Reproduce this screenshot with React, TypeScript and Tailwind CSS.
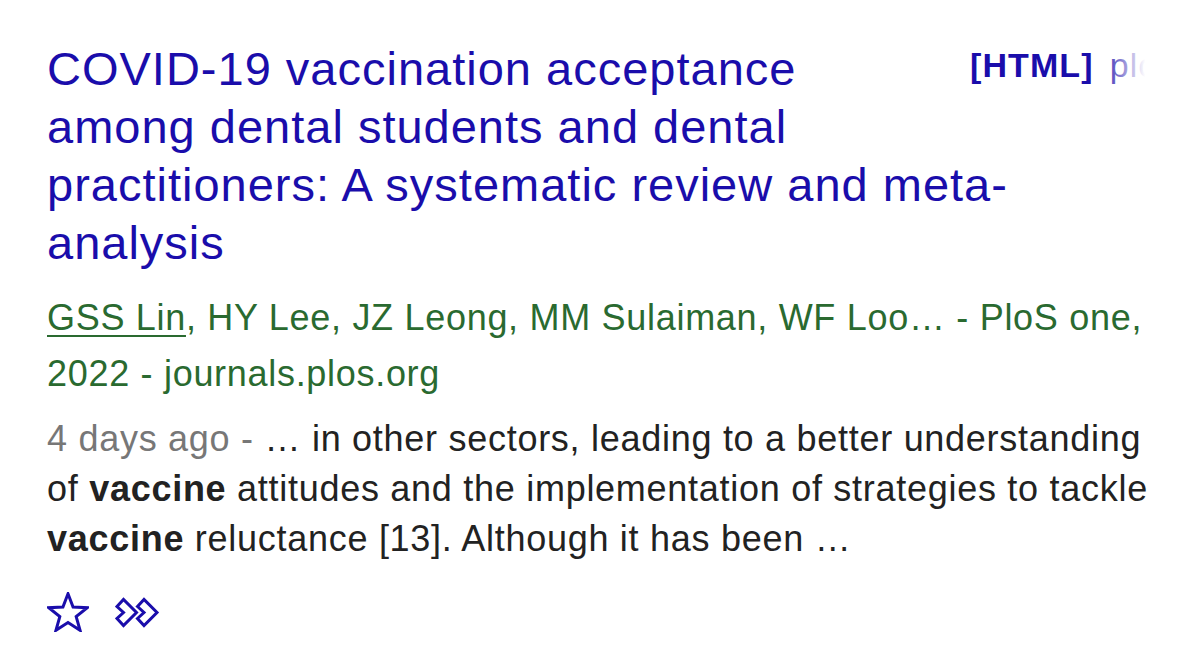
import React from "react";

function Star() {
  return (
    <svg width="42" height="40" viewBox="0 0 42 40" fill="none">
      <polygon
        points="21,1.8 26.06,15.04 40.3,15.67 29.18,24.66 33.05,38.3 21,30.6 8.95,38.3 12.82,24.66 1.7,15.67 15.94,15.04"
        stroke="#1a0dab"
        strokeWidth="3"
        strokeLinejoin="miter"
      />
    </svg>
  );
}

function DoubleChevron() {
  return (
    <svg width="45" height="31" viewBox="0 0 45 31" fill="none">
      <polygon
        points="2,9.5 8.5,2.5 21.5,15.5 8.5,28.5 2,21.5 8.5,15.5"
        stroke="#1a0dab"
        strokeWidth="3"
        strokeLinejoin="miter"
      />
      <polygon
        points="22.5,9.5 29,2.5 42,15.5 29,28.5 22.5,21.5 29,15.5"
        stroke="#1a0dab"
        strokeWidth="3"
        strokeLinejoin="miter"
      />
    </svg>
  );
}

export default function App() {
  return (
    <div
      className="min-h-screen bg-white pl-[47px] pr-[35px] pt-[40px]"
      style={{ fontFamily: '"Liberation Sans", Arial, sans-serif' }}
    >
      <div className="relative float-right ml-[60px] mt-[5px] w-[195px] overflow-hidden whitespace-nowrap text-[34px] leading-[40px] tracking-[1.1px] text-[#1a0dab]">
        <span className="font-bold">[HTML]</span>
        <span className="ml-[16px]">plos.org</span>
        <div className="absolute inset-y-0 right-0 w-[66px] bg-[linear-gradient(to_right,rgba(255,255,255,0),#ffffff_70%)]" />
      </div>
      <h3 className="mr-[128px] text-[47px] font-normal leading-[58px] tracking-[1px] text-[#1a0dab]">
        COVID-19 vaccination acceptance among dental students and dental
        practitioners: A systematic review and meta-analysis
      </h3>
      <div className="mt-[18px] text-[36px] leading-[56px] tracking-[0.7px] text-[#2a6a30]">
        <span className="underline decoration-[2px] underline-offset-[5px]">GSS Lin</span>, HY Lee, JZ Leong, MM
        Sulaiman, WF Loo… - PloS one, 2022 - journals.plos.org
      </div>
      <div className="mt-[12px] text-[36px] leading-[50px] tracking-[0.72px] text-[#222222]">
        <span className="text-[#777777]">4 days ago - </span>… in other sectors, leading to a better
        understanding of <b>vaccine</b> attitudes and the implementation of strategies to tackle{" "}
        <b>vaccine</b> reluctance [13]. Although it has been …
      </div>
      <div className="mt-[28px] flex items-center gap-[26px]">
        <Star />
        <DoubleChevron />
      </div>
    </div>
  );
}
